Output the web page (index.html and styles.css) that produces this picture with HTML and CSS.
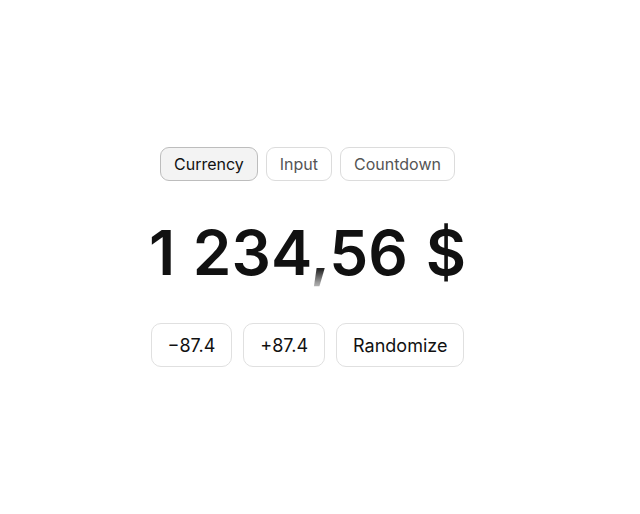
FILE: index.html
```html
<!DOCTYPE html>
<html>
<head>
<meta charset="utf-8">
<link rel="stylesheet" href="styles.css">
</head>
<body>
<main class="page">
  <div class="demo">
    <div class="tabs">
      <button class="tab tab-active">Currency</button>
      <button class="tab">Input</button>
      <button class="tab">Countdown</button>
    </div>
    <div class="number">1 234<span class="comma">,</span>56 $</div>
    <div class="actions">
      <button class="btn">−87.4</button>
      <button class="btn">+87.4</button>
      <button class="btn">Randomize</button>
    </div>
  </div>
</main>
</body>
</html>
```
FILE: styles.css
```css
html, body {
  margin: 0;
  padding: 0;
  background: #ffffff;
}
body {
  font-family: Inter, "Liberation Sans", sans-serif;
  color: #111111;
}
.page {
  width: 615px;
  height: 514px;
  display: flex;
  align-items: center;
  justify-content: center;
}
.demo {
  display: flex;
  flex-direction: column;
  align-items: center;
}
.tabs {
  display: flex;
  gap: 8px;
}
.tab {
  font-family: inherit;
  font-size: 16px;
  color: #555555;
  background: #ffffff;
  border: 1px solid #dcdcdc;
  border-radius: 9px;
  height: 34px;
  padding: 0 13px;
}
.tab-active {
  color: #111111;
  background: #f3f3f3;
  border-color: #bdbdbd;
}
.number {
  margin-top: 34px;
  font-size: 62px;
  font-weight: 600;
  line-height: 76px;
  word-spacing: 2px;
  color: #111111;
}
.comma {
  color: #444444;
  background: linear-gradient(to bottom, #222222 0%, #222222 72%, #9a9a9a 90%, #cccccc 100%);
  -webkit-background-clip: text;
  background-clip: text;
  -webkit-text-fill-color: transparent;
}
.actions {
  margin-top: 32px;
  display: flex;
  gap: 11px;
}
.btn {
  font-family: inherit;
  font-size: 18px;
  color: #111111;
  background: #ffffff;
  border: 1px solid #e0e0e0;
  border-radius: 10px;
  height: 44px;
  padding: 0 16px;
}
```
